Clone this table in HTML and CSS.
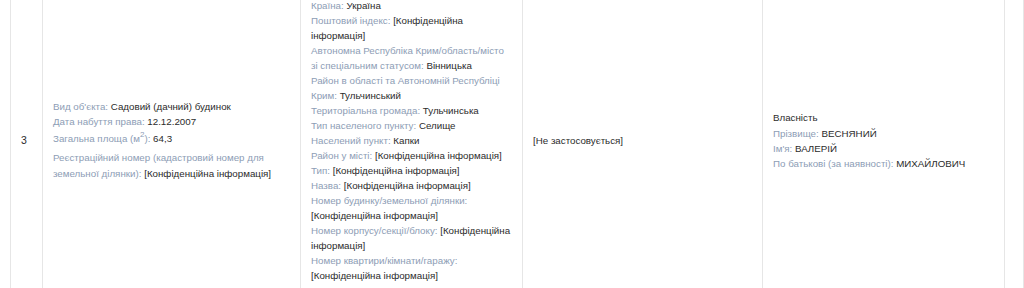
FILE: index.html
```html
<!DOCTYPE html>
<html lang="uk">
<head>
<meta charset="utf-8">
<link rel="stylesheet" href="styles.css">
</head>
<body>
<div class="wrap">
<table class="reg">
<colgroup>
<col class="c1"><col class="c2"><col class="c3"><col class="c4"><col class="c5"><col class="c6"><col class="c7">
</colgroup>
<tbody>
<tr>
<td class="num">3</td>
<td class="obj">
  <div class="line"><span class="lbl">Вид об'єкта:</span> Садовий (дачний) будинок</div>
  <div class="line"><span class="lbl">Дата набуття права:</span> 12.12.2007</div>
  <div class="line sq"><span class="lbl">Загальна площа (м<sup>2</sup>):</span> 64,3</div>
  <div class="line reg-no"><span class="lbl">Реєстраційний номер (кадастровий номер для земельної ділянки):</span> [Конфіденційна інформація]</div>
</td>
<td class="addr">
  <div><span class="lbl">Країна:</span> Україна</div>
  <div><span class="lbl">Поштовий індекс:</span> [Конфіденційна інформація]</div>
  <div><span class="lbl">Автономна Республіка Крим/область/місто зі спеціальним статусом:</span> Вінницька</div>
  <div><span class="lbl">Район в області та Автономній Республіці Крим:</span> Тульчинський</div>
  <div><span class="lbl">Територіальна громада:</span> Тульчинська</div>
  <div><span class="lbl">Тип населеного пункту:</span> Селище</div>
  <div><span class="lbl">Населений пункт:</span> Капки</div>
  <div><span class="lbl">Район у місті:</span> [Конфіденційна інформація]</div>
  <div><span class="lbl">Тип:</span> [Конфіденційна інформація]</div>
  <div><span class="lbl">Назва:</span> [Конфіденційна інформація]</div>
  <div><span class="lbl">Номер будинку/земельної ділянки:</span> [Конфіденційна інформація]</div>
  <div><span class="lbl">Номер корпусу/секції/блоку:</span> [Конфіденційна інформація]</div>
  <div><span class="lbl">Номер квартири/кімнати/гаражу:</span> [Конфіденційна інформація]</div>
</td>
<td class="mid">[Не застосовується]</td>
<td class="owner">
  <div class="kind">Власність</div>
  <div><span class="lbl">Прізвище:</span> ВЕСНЯНИЙ</div>
  <div><span class="lbl">Ім'я:</span> ВАЛЕРІЙ</div>
  <div><span class="lbl">По батькові (за наявності):</span> МИХАЙЛОВИЧ</div>
</td>
<td class="empty"></td>
<td class="empty"></td>
</tr>
</tbody>
</table>
</div>
</body>
</html>
```
FILE: styles.css
```css
html, body {
  margin: 0;
  padding: 0;
  background: #fff;
  overflow: hidden;
}
body {
  font-family: "Liberation Sans", Arial, sans-serif;
  font-size: 9.75px;
  color: #2b2b2b;
}
.wrap {
  padding-left: 10px;
  height: 288px;
  overflow: hidden;
}
.reg {
  border-collapse: collapse;
  table-layout: fixed;
  width: 1114px;
  margin-top: -10px;
}
.c1 { width: 32px; }
.c2 { width: 258px; }
.c3 { width: 222px; }
.c4 { width: 240px; }
.c5 { width: 242px; }
.c6 { width: 19px; }
.c7 { width: 101px; }
.reg td {
  border-left: 1px solid #e6e6e6;
  border-right: 1px solid #e6e6e6;
  padding: 8px 10px 8px 10px;
  vertical-align: middle;
  line-height: 15px;
}
.num {
  font-size: 10.5px;
}
.lbl {
  color: #8d9db5;
}
.obj sup {
  font-size: 8px;
  line-height: 0;
  vertical-align: 5px;
}
.obj .sq {
  padding-top: 2px;
}
.obj .reg-no {
  margin-top: 4px;
  line-height: 16px;
}
.addr {
  vertical-align: top;
}
.owner {
  line-height: 16px;
}
.owner .kind {
  margin-bottom: 1px;
}
```
